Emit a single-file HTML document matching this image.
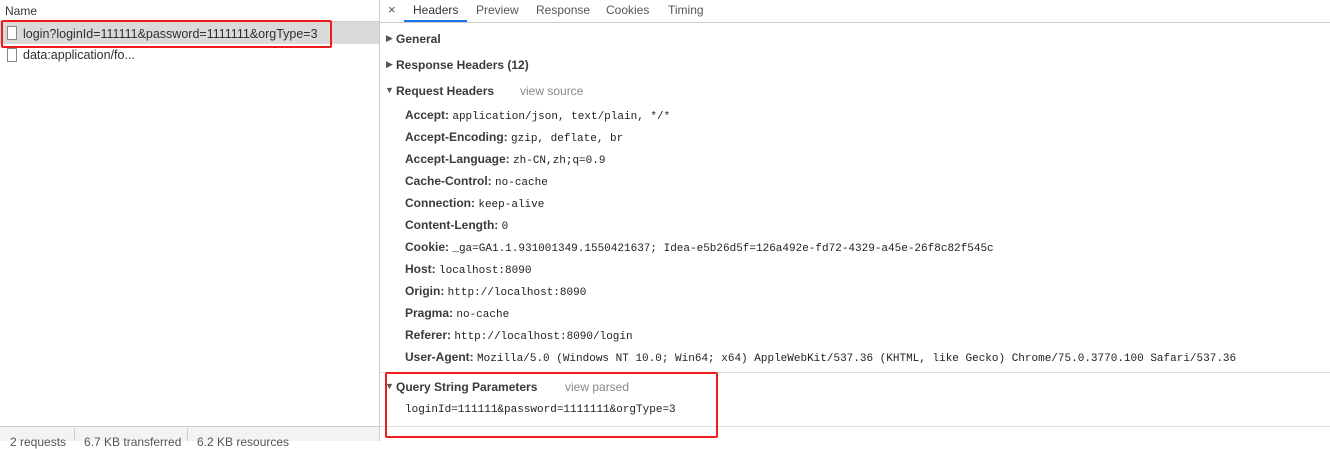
<!DOCTYPE html><html><head><style>
*{margin:0;padding:0;box-sizing:border-box}
body{width:1330px;height:441px;overflow:hidden;background:#fff;font-family:"Liberation Sans",sans-serif;font-size:12px;color:#303030;position:relative}
.a{position:absolute;white-space:nowrap}
.m{font-family:"Liberation Mono",monospace;font-size:11px;color:#222}
.b{font-weight:bold;color:#3a3a3a}
.tri{font-size:9px;color:#555}
</style></head><body>
<div class="a" style="left:0;top:0;width:379px;height:22px;border-bottom:1px solid #ccc;background:#fff"></div>
<div class="a" style="left:5px;top:4px;color:#333">Name</div>
<div class="a" style="left:379px;top:0;width:1px;height:441px;background:#ccc"></div>
<div class="a" style="left:0;top:22px;width:379px;height:22px;background:#dadada"></div>
<div class="a" style="left:7px;top:26px;width:10px;height:14px;border:1px solid #888;background:#fff"></div>
<div class="a" style="left:23px;top:27px;font-size:12.5px">login?loginId=111111&amp;password=1111111&amp;orgType=3</div>
<div class="a" style="left:7px;top:48px;width:10px;height:14px;border:1px solid #888;background:#fff"></div>
<div class="a" style="left:23px;top:48px;font-size:12.5px">data:application/fo...</div>
<div class="a" style="left:1px;top:20px;width:331px;height:28px;border:2px solid #f01c1c;border-radius:2px"></div>
<div class="a" style="left:0;top:426px;width:379px;height:15px;background:#f3f3f3;border-top:1px solid #ccc"></div>
<div class="a" style="left:10px;top:435px;color:#555">2 requests</div>
<div class="a" style="left:74px;top:428px;width:1px;height:13px;background:#ccc"></div>
<div class="a" style="left:84px;top:435px;color:#555">6.7 KB transferred</div>
<div class="a" style="left:187px;top:428px;width:1px;height:13px;background:#ccc"></div>
<div class="a" style="left:197px;top:435px;color:#555">6.2 KB resources</div>
<div class="a" style="left:380px;top:22px;width:950px;height:1px;background:#ccc"></div>
<div class="a" style="left:388px;top:2px;font-size:13px;color:#555">×</div>
<div class="a" style="left:404px;top:20px;width:63px;height:2px;background:#1a73e8"></div>
<div class="a" style="left:413px;top:3px;color:#333">Headers</div>
<div class="a" style="left:476px;top:3px;color:#555">Preview</div>
<div class="a" style="left:536px;top:3px;color:#555">Response</div>
<div class="a" style="left:606px;top:3px;color:#555">Cookies</div>
<div class="a" style="left:668px;top:3px;color:#555">Timing</div>
<div class="a tri" style="left:386px;top:33px">▶</div><div class="a b" style="left:396px;top:32px">General</div>
<div class="a tri" style="left:386px;top:59px">▶</div><div class="a b" style="left:396px;top:58px">Response Headers (12)</div>
<div class="a tri" style="left:385px;top:85px">▼</div><div class="a b" style="left:396px;top:84px">Request Headers</div><div class="a" style="left:520px;top:84px;color:#888">view source</div>
<div class="a" style="left:405px;top:108px"><span class="b">Accept:</span> <span class="m">application/json, text/plain, */*</span></div>
<div class="a" style="left:405px;top:130px"><span class="b">Accept-Encoding:</span> <span class="m">gzip, deflate, br</span></div>
<div class="a" style="left:405px;top:152px"><span class="b">Accept-Language:</span> <span class="m">zh-CN,zh;q=0.9</span></div>
<div class="a" style="left:405px;top:174px"><span class="b">Cache-Control:</span> <span class="m">no-cache</span></div>
<div class="a" style="left:405px;top:196px"><span class="b">Connection:</span> <span class="m">keep-alive</span></div>
<div class="a" style="left:405px;top:218px"><span class="b">Content-Length:</span> <span class="m">0</span></div>
<div class="a" style="left:405px;top:240px"><span class="b">Cookie:</span> <span class="m">_ga=GA1.1.931001349.1550421637; Idea-e5b26d5f=126a492e-fd72-4329-a45e-26f8c82f545c</span></div>
<div class="a" style="left:405px;top:262px"><span class="b">Host:</span> <span class="m">localhost:8090</span></div>
<div class="a" style="left:405px;top:284px"><span class="b">Origin:</span> <span class="m">http://localhost:8090</span></div>
<div class="a" style="left:405px;top:306px"><span class="b">Pragma:</span> <span class="m">no-cache</span></div>
<div class="a" style="left:405px;top:328px"><span class="b">Referer:</span> <span class="m">http://localhost:8090/login</span></div>
<div class="a" style="left:405px;top:350px"><span class="b">User-Agent:</span> <span class="m">Mozilla/5.0 (Windows NT 10.0; Win64; x64) AppleWebKit/537.36 (KHTML, like Gecko) Chrome/75.0.3770.100 Safari/537.36</span></div>
<div class="a" style="left:380px;top:372px;width:950px;height:1px;background:#ddd"></div>
<div class="a" style="left:380px;top:426px;width:950px;height:1px;background:#ddd"></div>
<div class="a tri" style="left:385px;top:381px">▼</div><div class="a b" style="left:396px;top:380px">Query String Parameters</div><div class="a" style="left:565px;top:380px;color:#888">view parsed</div>
<div class="a m" style="left:405px;top:404px">loginId=111111&amp;password=1111111&amp;orgType=3</div>
<div class="a" style="left:385px;top:372px;width:333px;height:66px;border:2px solid #f01c1c;border-radius:2px"></div>
</body></html>
